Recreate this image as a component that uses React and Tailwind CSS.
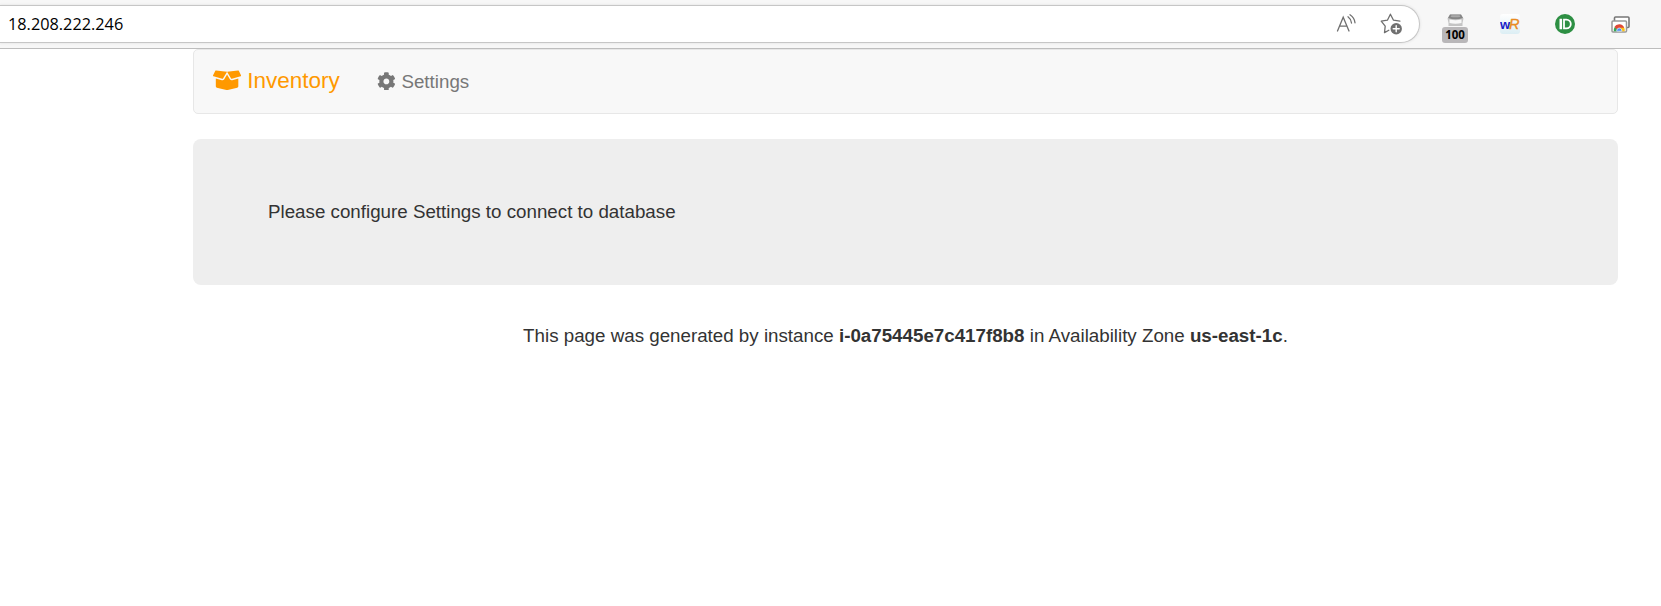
import { FaBoxOpen, FaCog } from "react-icons/fa";

function ReadAloud() {
  return (
    <svg className="h-5 w-5" viewBox="0 0 20 20" fill="none" stroke="#6f6f6f" strokeWidth="1.3" strokeLinecap="round">
      <path d="M1.5 17 7.200 3.200 13 17M3.500 12.200h7.600M12 2.800q3 2.200 3.500 6.200M14 .8q4.500 3 5 8" />
    </svg>
  );
}

function FavoriteStar() {
  return (
    <svg className="h-[22px] w-[22px]" viewBox="0 0 22 22" fill="none" strokeLinecap="round" strokeLinejoin="round">
      <path d="M8.8 17.2 4.5 19.6 5.2 13.1 1.2 8.2 7.4 7.2 10.4 1.2 13.5 7.2 19.9 8.2" stroke="#6f6f6f" strokeWidth="1.3" />
      <circle cx="16.2" cy="15.8" r="5.7" fill="#707070" />
      <path d="M16.2 12.8v6M13.2 15.8h6" stroke="#fff" strokeWidth="1.4" />
    </svg>
  );
}

function ZoomBadge() {
  return (
    <div className="flex w-[26px] flex-col items-center">
      <svg className="h-3 w-[17px]" viewBox="0 0 17 12">
        <path d="M3 .5h11l2.500 4-1 4.500v3h-14V9L.5 4.500z" fill="#c4c4c4" />
        <path d="M3 .5h11l2 3.500q-7.500 2.500-15 0z" fill="#858585" />
        <path d="M4.500 1.300h8l1 1.500q-5 1-10 0z" fill="#aaa" />
        <path d="M2.500 5.500q6 1.500 12 0v3.500q-6 1.500-12 0z" fill="#f8f8f8" />
      </svg>
      <span className="mt-px flex h-4 w-[26px] items-center justify-center rounded-[3px] bg-[#b9b7b9] font-['Open_Sans',sans-serif] text-[11.5px] font-bold leading-none text-black">100</span>
    </div>
  );
}

function WordReference() {
  return (
    <svg className="h-5 w-5" viewBox="0 0 20 20">
      <defs>
        <linearGradient id="tile" x2="0" y2="1">
          <stop stopColor="#fff" />
          <stop offset="1" stopColor="#dceef4" />
        </linearGradient>
      </defs>
      <rect width="20" height="20" rx="3" fill="url(#tile)" />
      <text x="0" y="15" fontFamily="Liberation Sans, sans-serif" fontWeight="bold" fontSize="13" fill="#1720c7">w</text>
      <text x="9" y="15" fontFamily="Liberation Sans, sans-serif" fontStyle="italic" fontSize="14.5" fill="#e98b23" stroke="#e98b23" strokeWidth=".4">R</text>
    </svg>
  );
}

function Pushbullet() {
  return (
    <svg className="h-5 w-5" viewBox="0 0 20 20">
      <circle cx="10" cy="10" r="10" fill="#2d8f43" />
      <rect x="4.500" y="4.700" width="2.600" height="10.600" rx=".4" fill="#fff" />
      <path d="M9 5.600h2.400a4.400 4.400 0 0 1 0 8.800H9z" fill="none" stroke="#fff" strokeWidth="1.800" />
    </svg>
  );
}

function RemoteDesktop() {
  return (
    <svg className="h-[17px] w-[19px]" viewBox="0 0 19 17">
      <rect x="3.500" y="1" width="14.500" height="10.500" rx="1" fill="#fff" stroke="#777" strokeWidth="1.600" />
      <rect x="1" y="5" width="14.500" height="11" rx="1" fill="#fff" stroke="#999" strokeWidth="1.500" />
      <path d="M2.800 15.200a5.500 5.500 0 0 1 1.200-4.500l4 4.500z" fill="#36a853" />
      <path d="M13.700 15.200a5.500 5.500 0 0 0-.9-4.200H8v4.200z" fill="#fbc116" />
      <path d="M3.400 11a5.400 5.400 0 0 1 9.800.7H8.300l-2.500 1.600z" fill="#df4936" />
      <path d="M5.700 15.200a2.600 2.600 0 1 1 5.100 0z" fill="#4e8df5" stroke="#fff" strokeWidth=".6" />
    </svg>
  );
}

export default function App() {
  return (
    <div className="h-[606px] w-[1661px] overflow-hidden bg-white font-['Liberation_Sans',Arial,sans-serif] text-[18.75px] leading-[27px] text-[#333]">
      <header className="flex h-[49px] items-start border-b border-[#bdbdbd] bg-[#f7f7f7] pt-[5px]">
        <div className="flex h-[38px] w-[1420px] items-center rounded-r-full border border-l-0 border-[#c6c6c6] bg-white pl-2 pr-[17px] shadow-[0_0_3px_#ddd]">
          <span className="mt-px font-['Open_Sans',sans-serif] text-[16.3px] text-black">18.208.222.246</span>
          <div className="ml-auto flex items-center gap-6">
            <ReadAloud />
            <FavoriteStar />
          </div>
        </div>
        <div className="ml-[22px] flex h-[38px] items-start">
          <div className="mt-[9px]"><ZoomBadge /></div>
          <div className="ml-8 mt-[9px]"><WordReference /></div>
          <div className="ml-[35px] mt-[9px]"><Pushbullet /></div>
          <div className="ml-9 mt-[11px]"><RemoteDesktop /></div>
        </div>
      </header>
      <main className="ml-[193px] w-[1425px]">
        <nav className="flex h-[65px] items-center rounded-[5px] border border-[#e7e7e7] bg-[#f8f8f8] pl-[19px]">
          <a className="flex items-center gap-[6px] text-[22.5px] text-[#ff9900]">
            <FaBoxOpen className="-mt-[3px] h-[22.5px] w-[28.125px]" />
            <span className="-mt-0.5">Inventory</span>
          </a>
          <a className="ml-[37px] flex items-center gap-[6px] text-[#777]">
            <FaCog className="-mt-px h-[18.75px] w-[18.75px]" />
            <span className="-mt-px">Settings</span>
          </a>
        </nav>
        <section className="mt-[25px] flex h-[146px] items-center rounded-[8px] bg-[#eee] pl-[75px]">
          <p className="-mt-0.5">Please configure Settings to connect to database</p>
        </section>
        <p className="mt-[37px] text-center">
          This page was generated by instance <b>i-0a75445e7c417f8b8</b> in Availability Zone <b>us-east-1c</b>.
        </p>
      </main>
    </div>
  );
}
